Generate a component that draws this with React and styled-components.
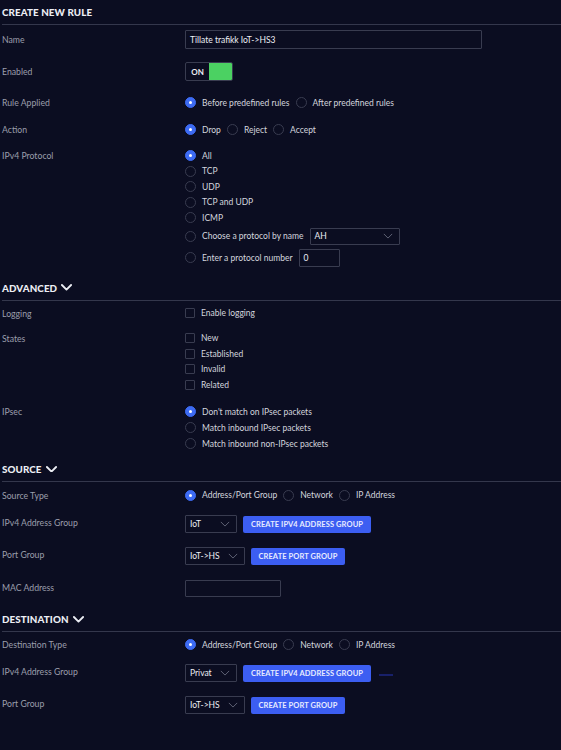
import React from "react";
import styled, { createGlobalStyle } from "styled-components";

const Global = createGlobalStyle`
  html, body {
    margin: 0;
    padding: 0;
    background: #0b0d21;
  }
  body {
    font-family: Lato, "Open Sans", sans-serif;
    -webkit-font-smoothing: antialiased;
  }
`;

const Page = styled.div`
  width: 561px;
  height: 750px;
  background: #0b0d21;
  overflow: hidden;
  padding-left: 2px;
  box-sizing: border-box;
`;

const SectionHead = styled.div`
  display: flex;
  align-items: center;
  gap: 4px;
  margin-top: ${(p) => p.top}px;
  padding-bottom: 6px;
  border-bottom: 1px solid #34374c;
  height: 12px;
  line-height: 12px;
  font-size: 9.8px;
  font-weight: 900;
  letter-spacing: 0.1px;
  color: #eceef4;
  text-transform: uppercase;
`;

const Row = styled.div`
  display: grid;
  grid-template-columns: 183px 1fr;
  align-items: start;
  margin-top: ${(p) => p.top}px;
`;

const Label = styled.div`
  font-size: 8.7px;
  line-height: ${(p) => p.lh || 19}px;
  height: ${(p) => p.lh || 19}px;
  color: #9b9eac;
  margin-top: ${(p) => p.shift || 0}px;
`;

const Stack = styled.div`
  display: flex;
  flex-direction: column;
`;

const Line = styled.div`
  display: flex;
  align-items: center;
  gap: 6px;
  height: ${(p) => p.h || 19}px;
`;

const Opt = styled.label`
  display: flex;
  align-items: center;
  gap: 6px;
  font-size: 8.5px;
  color: #d3d5de;
  white-space: nowrap;
`;

const Radio = styled.span`
  width: 11px;
  height: 11px;
  box-sizing: border-box;
  border-radius: 50%;
  flex: none;
  display: flex;
  align-items: center;
  justify-content: center;
  border: 1px solid ${(p) => (p.on ? "#3d6bf3" : "#393c50")};
  background: ${(p) => (p.on ? "#3d6bf3" : "transparent")};
  &::after {
    content: "";
    width: 3px;
    height: 3px;
    border-radius: 50%;
    background: #ffffff;
    display: ${(p) => (p.on ? "block" : "none")};
  }
`;

const Check = styled.span`
  width: 10px;
  height: 10px;
  box-sizing: border-box;
  border: 1px solid #393c50;
  border-radius: 1px;
  flex: none;
`;

const Input = styled.div`
  width: ${(p) => p.w}px;
  height: ${(p) => p.h || 19}px;
  box-sizing: border-box;
  border: 1px solid #393c50;
  border-radius: 1px;
  padding-left: 4px;
  display: flex;
  align-items: center;
  font-size: 8.5px;
  color: #eceef4;
  flex: none;
`;

const Select = styled(Input)`
  justify-content: space-between;
  padding-right: 6px;
  svg {
    flex: none;
  }
`;

const Toggle = styled.div`
  display: flex;
  width: 48px;
  height: 19px;
  box-sizing: border-box;
  border: 1px solid #393c50;
  border-radius: 2px;
  overflow: hidden;
`;

const ToggleText = styled.span`
  width: 23px;
  font-size: 8px;
  font-weight: 700;
  color: #eceef4;
  display: flex;
  align-items: center;
  justify-content: center;
`;

const ToggleOn = styled.span`
  flex: 1;
  background: #4bd162;
`;

const Button = styled.button`
  height: 17px;
  width: ${(p) => p.w}px;
  border: none;
  border-radius: 2px;
  background: #3c5ef2;
  color: #e8ecff;
  font-family: inherit;
  font-size: 7.5px;
  font-weight: 700;
  letter-spacing: 0.1px;
  text-transform: uppercase;
  padding: 0;
  cursor: pointer;
`;

const Dash = styled.span`
  width: 14px;
  height: 2px;
  background: #18206a;
  margin-left: 2px;
  margin-top: 4px;
`;

const Group = styled.div`
  display: flex;
  align-items: center;
  gap: 6px;
  height: 19px;
`;

const Chevron = ({ size = 11, color = "#eceef4", w = 2 }) => (
  <svg width={size} height={size * 0.6} viewBox="0 0 12 7">
    <polyline points="1,1 6,6 11,1" fill="none" stroke={color} strokeWidth={w} strokeLinecap="round" strokeLinejoin="round" />
  </svg>
);

const SelChevron = () => (
  <svg width="10" height="6" viewBox="0 0 12 7">
    <polyline points="1,1 6,6 11,1" fill="none" stroke="#6f7285" strokeWidth="1" />
  </svg>
);

const RadioOpt = ({ on, children }) => (
  <Opt>
    <Radio on={on} />
    {children}
  </Opt>
);

const CheckOpt = ({ children }) => (
  <Opt>
    <Check />
    {children}
  </Opt>
);

export default function App() {
  return (
    <Page>
      <Global />
      <SectionHead top={6}>Create New Rule</SectionHead>

      <Row top={5}>
        <Label>Name</Label>
        <Input w={297}>Tillate trafikk IoT-&gt;HS3</Input>
      </Row>

      <Row top={13}>
        <Label>Enabled</Label>
        <Toggle>
          <ToggleText>ON</ToggleText>
          <ToggleOn />
        </Toggle>
      </Row>

      <Row top={12}>
        <Label>Rule Applied</Label>
        <Line>
          <RadioOpt on>Before predefined rules</RadioOpt>
          <RadioOpt>After predefined rules</RadioOpt>
        </Line>
      </Row>

      <Row top={8}>
        <Label>Action</Label>
        <Line>
          <RadioOpt on>Drop</RadioOpt>
          <RadioOpt>Reject</RadioOpt>
          <RadioOpt>Accept</RadioOpt>
        </Line>
      </Row>

      <Row top={9}>
        <Label lh={15.5}>IPv4 Protocol</Label>
        <Stack>
          <Line h={15.5}><RadioOpt on>All</RadioOpt></Line>
          <Line h={15.5}><RadioOpt>TCP</RadioOpt></Line>
          <Line h={15.5}><RadioOpt>UDP</RadioOpt></Line>
          <Line h={15.5}><RadioOpt>TCP and UDP</RadioOpt></Line>
          <Line h={15.5}><RadioOpt>ICMP</RadioOpt></Line>
          <Line h={21}>
            <RadioOpt>Choose a protocol by name</RadioOpt>
            <Select w={90} h={17}>AH<SelChevron /></Select>
          </Line>
          <Line h={22}>
            <RadioOpt>Enter a protocol number</RadioOpt>
            <Input w={41} h={18}>0</Input>
          </Line>
        </Stack>
      </Row>

      <SectionHead top={13}>Advanced <Chevron /></SectionHead>

      <Row top={3}>
        <Label>Logging</Label>
        <Line><CheckOpt>Enable logging</CheckOpt></Line>
      </Row>

      <Row top={8}>
        <Label lh={15.6}>States</Label>
        <Stack>
          <Line h={15.6}><CheckOpt>New</CheckOpt></Line>
          <Line h={15.6}><CheckOpt>Established</CheckOpt></Line>
          <Line h={15.6}><CheckOpt>Invalid</CheckOpt></Line>
          <Line h={15.6}><CheckOpt>Related</CheckOpt></Line>
        </Stack>
      </Row>

      <Row top={11}>
        <Label lh={16}>IPsec</Label>
        <Stack>
          <Line h={16}><RadioOpt on>Don't match on IPsec packets</RadioOpt></Line>
          <Line h={16}><RadioOpt>Match inbound IPsec packets</RadioOpt></Line>
          <Line h={16}><RadioOpt>Match inbound non-IPsec packets</RadioOpt></Line>
        </Stack>
      </Row>

      <SectionHead top={11}>Source <Chevron /></SectionHead>

      <Row top={4}>
        <Label>Source Type</Label>
        <Line>
          <RadioOpt on>Address/Port Group</RadioOpt>
          <RadioOpt>Network</RadioOpt>
          <RadioOpt>IP Address</RadioOpt>
        </Line>
      </Row>

      <Row top={10}>
        <Label shift={-2}>IPv4 Address Group</Label>
        <Group>
          <Select w={52} h={18}>IoT<SelChevron /></Select>
          <Button w={128}>Create IPv4 Address Group</Button>
        </Group>
      </Row>

      <Row top={13}>
        <Label shift={-2}>Port Group</Label>
        <Group>
          <Select w={60} h={18}>IoT-&gt;HS<SelChevron /></Select>
          <Button w={94}>Create Port Group</Button>
        </Group>
      </Row>

      <Row top={13.5}>
        <Label shift={-1}>MAC Address</Label>
        <Line><Input w={96} h={17} /></Line>
      </Row>

      <SectionHead top={15}>Destination <Chevron /></SectionHead>

      <Row top={3}>
        <Label>Destination Type</Label>
        <Line>
          <RadioOpt on>Address/Port Group</RadioOpt>
          <RadioOpt>Network</RadioOpt>
          <RadioOpt>IP Address</RadioOpt>
        </Line>
      </Row>

      <Row top={9.5}>
        <Label shift={-2}>IPv4 Address Group</Label>
        <Group>
          <Select w={52} h={18}>Privat<SelChevron /></Select>
          <Button w={128}>Create IPv4 Address Group</Button>
          <Dash />
        </Group>
      </Row>

      <Row top={13}>
        <Label shift={-2}>Port Group</Label>
        <Group>
          <Select w={60} h={18}>IoT-&gt;HS<SelChevron /></Select>
          <Button w={94}>Create Port Group</Button>
        </Group>
      </Row>
    </Page>
  );
}
